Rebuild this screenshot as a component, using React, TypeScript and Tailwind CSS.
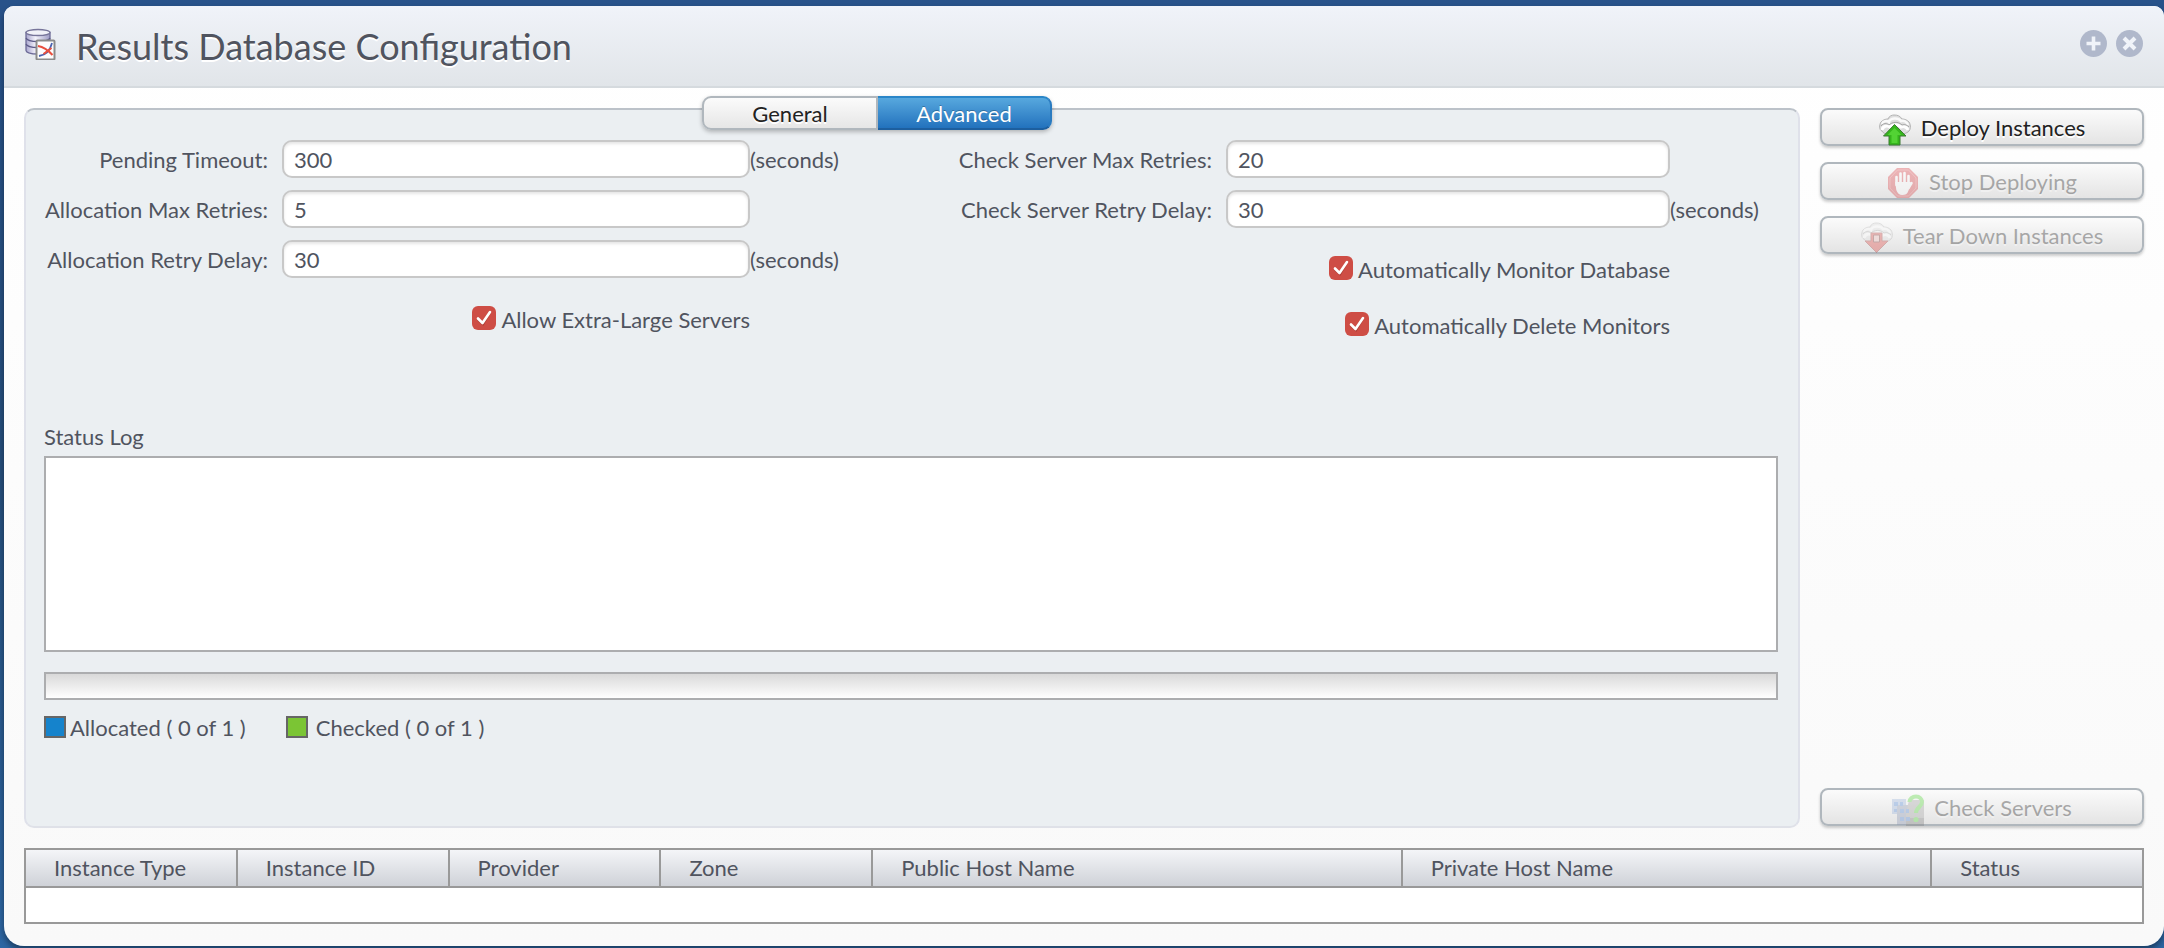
import { useState } from "react";
import type { ReactNode } from "react";

// ==========================================
// Icons
// ==========================================
function DatabaseIcon() {
  return (
    <svg viewBox="0 0 32 32" className="h-8 w-8 shrink-0" aria-hidden="true">
      <defs>
        <linearGradient id="db-side" x1="0" x2="1" y1="0" y2="0">
          <stop offset="0" stopColor="#a9a6cf" />
          <stop offset="0.4" stopColor="#f3f2fb" />
          <stop offset="1" stopColor="#9d9ac4" />
        </linearGradient>
      </defs>
      <path d="M2 4.500v18c0 2 5 3.500 12 3.500s12-1.500 12-3.500v-18z" fill="url(#db-side)" stroke="#6c6a96" strokeWidth="1.300" />
      <ellipse cx="14" cy="4.500" rx="12" ry="3" fill="#f1f1f8" stroke="#77759a" strokeWidth="1.300" />
      <path d="M2 10c1 2.500 6 3.500 12 3.500s11-1 12-3.500M2 16c1 2.500 6 3.500 12 3.500" fill="none" stroke="#5d5b88" strokeWidth="1.300" />
      <rect x="12.500" y="12.500" width="18" height="19" rx="1" fill="#fdfdfd" stroke="#8b8b8b" strokeWidth="2" />
      <path d="M15 28c7-1 11-5 13-13" fill="none" stroke="#4a63b0" strokeWidth="1.800" />
      <path d="M14 18c6 1 10 4 14.500 9M27.500 20l-8 6" fill="none" stroke="#e8503f" strokeWidth="2" />
    </svg>
  );
}

function Cloud() {
  return (
    <>
      <path
        d="M3 17c-3-1-3-6-1-9 2-2 4-3 7-3 1-3 4-4 6-4 4 0 6 1 8 4 3 0 5 1 7 3 2 3 2 8-1 10-3 2-7 3-10 2H9c-3 0-5-1-6-3z"
        fill="#dedede"
        stroke="#b3b3b3"
        strokeWidth="1"
      />
      <path d="M3 10c1-3 5-4 7-2 1-4 9-5 12-1 3-1 6 1 7 4" fill="none" stroke="#fafafa" strokeWidth="2.500" />
      <path d="M3 16c1-4 5-5 8-3 3-3 8-3 11 0 3-1 6 0 7 3" fill="none" stroke="#fff" strokeWidth="3" />
      <path d="M2 12c2-3 6-3 8-1 3-3 9-4 13 0 3-1 5 0 7 2" fill="none" stroke="#a5a5a5" strokeWidth="1" />
    </>
  );
}

function DeployIcon() {
  return (
    <svg viewBox="0 0 32 32" className="h-8 w-8" aria-hidden="true">
      <Cloud />
      <path d="M15.500 10.500L27 22h-6v9H10v-9H4.500z" fill="#35b51c" stroke="#3d7b33" strokeWidth="1" />
      <path d="M15.500 14l7 7h-4v8h-6v-8h-4z" fill="#52d334" />
    </svg>
  );
}

function StopIcon() {
  return (
    <svg viewBox="0 0 32 32" className="h-8 w-8" aria-hidden="true">
      <path d="M10 0h12l9 9v12l-9 9H10l-9-9V9z" fill="#d93a40" />
      <path d="M10.500 2h11l7.500 8v10l-7.500 8h-11L3 20V10z" fill="none" stroke="#e86e70" strokeWidth="1" />
      <path
        d="M9.500 17V9M13.500 15V5.500M17.500 15V5M21.500 16V8M24.500 15l-3 5"
        fill="none"
        stroke="#fff"
        strokeWidth="2.600"
        strokeLinecap="round"
      />
      <path d="M8.200 14h14.600l1.500 1-3 8c-1 3-3 4-6 4s-5-2-6-5z" fill="#fff" />
    </svg>
  );
}

function TearDownIcon() {
  return (
    <svg viewBox="0 0 32 32" className="h-8 w-8" aria-hidden="true">
      <Cloud />
      <path d="M10 11h11v8h6L15.500 30.500 4 19h6z" fill="#e0433f" stroke="#a33c38" strokeWidth="1" />
      <path d="M12.500 13h6v7h-6z" fill="#f0b9b5" stroke="#7d2b28" strokeWidth="1" />
    </svg>
  );
}

function CheckServersIcon() {
  return (
    <svg viewBox="0 0 32 32" className="h-8 w-8" aria-hidden="true">
      <path d="M0 5h14v15H0z" fill="#9bb4dc" />
      <path d="M5 11h13v20H5z" fill="#8c98b4" />
      <path d="M17 6h15v26H14V20z" fill="#a3a3a3" />
      <path d="M14 24h18v8H14z" fill="#808080" />
      <path d="M2 8h4v4H2zM8 8h3v4H8zM2 15h3v3H2zM8 15h4v4H8zM14 15h3v4h-3zM8 23h4v4H8zM14 23h4v4h-4z" fill="#5489d6" />
      <path d="M17.500 8c0-3 3-5.500 6.500-5.500s6 2.500 6 5.500c0 5-6 5-6 11" fill="none" stroke="#54d838" strokeWidth="4" />
      <circle cx="24" cy="25.500" r="2.600" fill="#54d838" />
    </svg>
  );
}

// ==========================================
// Form parts
// ==========================================
type FieldProps = { id: string; label: string; value: string; unit?: string };

function Field({ id, label, value, unit }: FieldProps) {
  return (
    <>
      <label htmlFor={id} className="pt-0.5 pr-3.5 text-right whitespace-nowrap">
        {label}
      </label>
      <input
        id={id}
        type="text"
        defaultValue={value}
        className="h-[38px] w-full min-w-0 rounded-[10px] border-2 border-[#c8c8c8] bg-white px-2.5 shadow-[inset_0_2px_3px_rgba(0,0,0,0.1)] outline-none"
      />
      <span className="pt-0.5">{unit}</span>
    </>
  );
}

function Check({ label }: { label: string }) {
  return (
    <label className="flex h-6 items-center justify-end gap-[5px] whitespace-nowrap">
      <span className="relative h-6 w-6">
        <input type="checkbox" defaultChecked className="peer block h-6 w-6 appearance-none rounded-[6px] bg-[#ce4d45]" />
        <svg viewBox="0 0 24 24" className="pointer-events-none absolute inset-0 hidden h-6 w-6 peer-checked:block">
          <path d="M6 13.500l5 4.500 7-12" fill="none" stroke="#8e2f29" strokeOpacity="0.500" strokeWidth="2.500" />
          <path d="M6 12.500l4.500 4.500L18 6" fill="none" stroke="#fff" strokeWidth="2.600" strokeLinecap="round" strokeLinejoin="round" />
        </svg>
      </span>
      <span className="pt-1">{label}</span>
    </label>
  );
}

type ActionProps = { icon: ReactNode; label: string; disabled?: boolean };

function ActionButton({ icon, label, disabled }: ActionProps) {
  return (
    <button
      type="button"
      disabled={disabled}
      className="block h-[38px] w-full rounded-[8px] border-2 border-[#b0b7bd] bg-linear-to-b from-[#fbfbfb] to-[#e4e4e4] text-[#222] shadow-[0_2px_3px_rgba(0,0,0,0.2)]"
    >
      <span className={disabled ? "flex h-full items-center justify-center gap-2.5 opacity-35" : "flex h-full items-center justify-center gap-2.5"}>
        <span className="-mb-0.5 self-end">{icon}</span>
        <span className="pt-0.5 [text-shadow:0_2px_0_#fff]">{label}</span>
      </span>
    </button>
  );
}

const columns = ["Instance Type", "Instance ID", "Provider", "Zone", "Public Host Name", "Private Host Name", "Status"];

// ==========================================
// Results Database Configuration
// ==========================================
export default function App() {
  const [tab, setTab] = useState("Advanced");

  return (
    <div className="flex min-h-screen flex-col bg-linear-to-b from-[#28528a] via-[#264f7c] to-[#2d66a3] pt-1.5 pb-0.5 pl-1 font-[Lato,sans-serif] text-[22px] leading-[26px] text-[#50545f]">
      <div className="flex flex-1 flex-col overflow-hidden rounded-t-[10px] rounded-b-[20px] bg-linear-to-b from-white to-[#f9f9f9] shadow-[0_4px_6px_rgba(0,0,0,0.4)]">
        <header className="flex h-[82px] items-center border-b-2 border-[#d5dade] bg-linear-to-b from-[#f0f3f9] to-[#e1e5e9] pr-[21px] pl-5">
          <div className="-mt-1">
            <DatabaseIcon />
          </div>
          <h1 className="ml-5 text-[36px] leading-[44px] [text-shadow:0_2px_0_#fff]">Results Database Configuration</h1>
          <div className="mb-1.5 ml-auto flex gap-[9px]">
            <button type="button" aria-label="Maximize">
              <svg viewBox="0 0 27 27" className="block h-[27px] w-[27px]">
                <circle cx="13.500" cy="13.500" r="13.500" fill="#b0b8cb" />
                <path d="M13.500 6.500v14M6.500 13.500h14" stroke="#f0f3f9" strokeWidth="3.600" />
              </svg>
            </button>
            <button type="button" aria-label="Close">
              <svg viewBox="0 0 27 27" className="block h-[27px] w-[27px]">
                <circle cx="13.500" cy="13.500" r="13.500" fill="#b0b8cb" />
                <path d="M8 8l11 11M19 8L8 19" stroke="#f0f3f9" strokeWidth="4" />
              </svg>
            </button>
          </div>
        </header>

        <main className="flex flex-1 flex-col gap-5 p-5 pb-[22px]">
          <div className="flex flex-1 gap-5">
            <section className="relative flex-1 rounded-[10px] border-2 border-t-[#bcc2c9] border-r-[#dfe1ea] border-b-[#dfe1e8] border-l-[#dfe1ea] bg-[#ebeff2] pt-[30px] pr-5 pl-[18px]">
              {/* Tabs sit on the top edge of the panel */}
              <div role="tablist" className="absolute -top-3.5 left-[calc(50%-35px)] flex h-[34px] w-[350px] -translate-x-1/2 rounded-[9px] shadow-[0_2px_4px_rgba(0,0,0,0.25)]">
                {["General", "Advanced"].map((name) => (
                  <button
                    key={name}
                    type="button"
                    role="tab"
                    aria-selected={tab === name}
                    onClick={() => setTab(name)}
                    className={
                      tab === name
                        ? "flex-1 border-2 border-x-[#2a7bc0] border-t-[#2a86c8] border-b-[#1d5f9f] bg-linear-to-b from-[#57a8de] to-[#2272bd] pt-0.5 text-white first:rounded-l-[9px] first:border-r-0 last:rounded-r-[9px] last:border-l-0 [text-shadow:0_-1px_0_rgba(0,0,0,0.25)]"
                        : "flex-1 border-2 border-[#b0b7bd] bg-linear-to-b from-[#fbfbfb] to-[#e6e6e6] pt-0.5 text-[#222] first:rounded-l-[9px] last:rounded-r-[9px] [text-shadow:0_2px_0_#fff]"
                    }
                  >
                    {name}
                  </button>
                ))}
              </div>

              <div className="grid grid-cols-[912fr_822fr]">
                <div>
                  <div className="grid grid-cols-[238px_1fr_206px] items-center gap-y-3">
                    <Field id="pending-timeout" label="Pending Timeout:" value="300" unit="(seconds)" />
                    <Field id="allocation-retries" label="Allocation Max Retries:" value="5" />
                    <Field id="allocation-delay" label="Allocation Retry Delay:" value="30" unit="(seconds)" />
                  </div>
                  <div className="mt-7 pr-[206px]">
                    <Check label="Allow Extra-Large Servers" />
                  </div>
                </div>
                <div>
                  <div className="grid grid-cols-[270px_1fr_108px] items-center gap-y-3">
                    <Field id="check-retries" label="Check Server Max Retries:" value="20" />
                    <Field id="check-delay" label="Check Server Retry Delay:" value="30" unit="(seconds)" />
                  </div>
                  <div className="mt-7 flex flex-col gap-8 pr-[108px]">
                    <Check label="Automatically Monitor Database" />
                    <Check label="Automatically Delete Monitors" />
                  </div>
                </div>
              </div>

              <label htmlFor="status-log" className="mt-[88px] block">
                Status Log
              </label>
              <textarea id="status-log" readOnly className="mt-1.5 block h-[196px] w-full resize-none border-2 border-[#acadaf] bg-white outline-none" />
              <div role="progressbar" aria-label="Deployment progress" className="mt-5 h-7 border-2 border-[#acadaf] bg-linear-to-b from-[#d9d9d9] to-white" />
              <div className="mt-4 flex h-[22px] items-center">
                <span className="h-[22px] w-[22px] border-2 border-[#666] bg-[#1583cc]" />
                <span className="ml-1 pt-0.5">Allocated ( 0 of 1 )</span>
                <span className="ml-10 h-[22px] w-[22px] border-2 border-[#666] bg-[#7bc534]" />
                <span className="ml-2 pt-0.5">Checked ( 0 of 1 )</span>
              </div>
            </section>

            <aside className="flex w-[324px] flex-col gap-4 pb-0.5">
              <ActionButton icon={<DeployIcon />} label="Deploy Instances" />
              <ActionButton icon={<StopIcon />} label="Stop Deploying" disabled />
              <ActionButton icon={<TearDownIcon />} label="Tear Down Instances" disabled />
              <div className="mt-auto">
                <ActionButton icon={<CheckServersIcon />} label="Check Servers" disabled />
              </div>
            </aside>
          </div>

          <table className="w-full table-fixed border-collapse border-2 border-[#999] bg-white">
            <colgroup>
              <col className="w-[10%]" />
              <col className="w-[10%]" />
              <col className="w-[10%]" />
              <col className="w-[10%]" />
              <col className="w-[25%]" />
              <col className="w-[25%]" />
              <col className="w-[10%]" />
            </colgroup>
            <thead>
              <tr className="h-[38px] bg-linear-to-b from-[#f5f6f9] to-[#ced1d7]">
                {columns.map((name) => (
                  <th key={name} className="border-2 border-[#999] p-0 pl-7 text-left font-normal">
                    {name}
                  </th>
                ))}
              </tr>
            </thead>
            <tbody>
              <tr className="h-9">
                <td colSpan={7} />
              </tr>
            </tbody>
          </table>
        </main>
      </div>
    </div>
  );
}
